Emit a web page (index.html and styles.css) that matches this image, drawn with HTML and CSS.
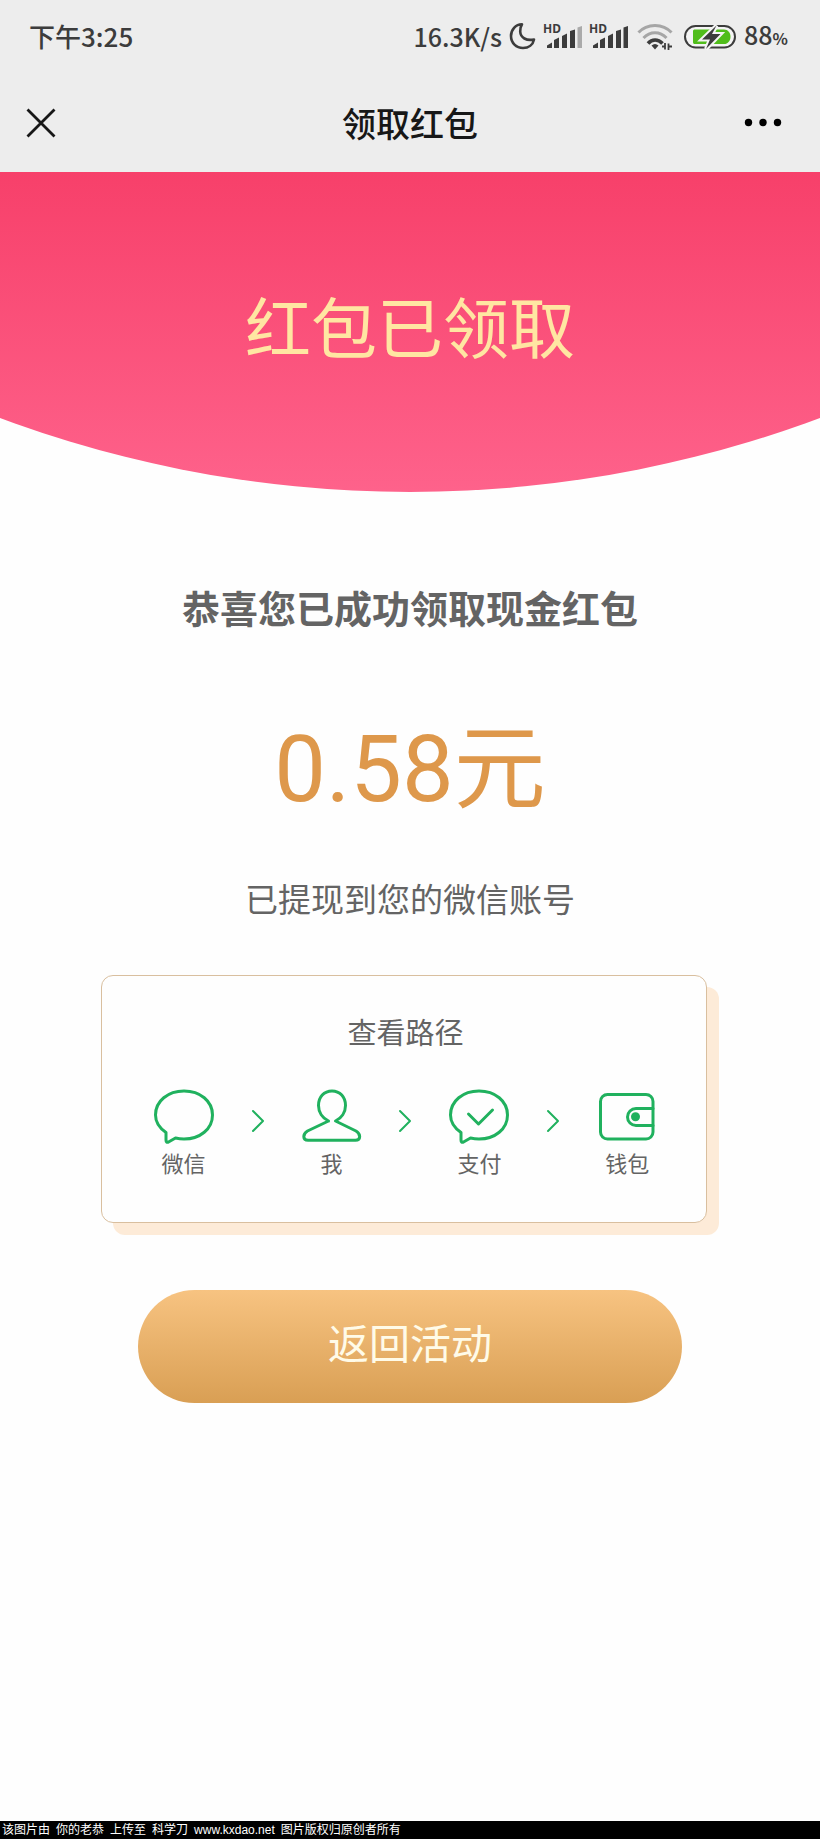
FILE: index.html
```html
<!DOCTYPE html>
<html lang="zh-CN">
<head>
<meta charset="utf-8">
<meta name="viewport" content="width=device-width, initial-scale=1">
<title>领取红包</title>
<link rel="stylesheet" href="styles.css">
</head>
<body>
<header class="top">
  <div class="status">
    <span class="time">下午3:25</span>
    <div class="indicators">
      <span class="speed">16.3K/s</span>
      <svg width="28" height="30" viewBox="0 0 28 30" fill="none" stroke="#3c3c3c" stroke-width="2.6" stroke-linejoin="round"><path d="M14 2.300C7.500 2.300 3 7.700 3 14C3 21 8.300 26 15 26C20.500 26 25 22.800 26 17.500C18.500 19 12.500 16 12.200 9.500C12.100 6.800 12.800 4.200 14 2.300Z"/></svg>
      <svg width="40" height="30" viewBox="0 0 40 30" fill="#3c3c3c"><text class="hd" x="1" y="11">HD</text><path d="M5 26v-2.500l5-3V26zM12 26v-8l5-2.500V26zM20 26V14l5-2.500V26zM28 26V9l5-1.500V26z"/><path fill="#aaa" d="M35.500 26V5.500l4.500-1.500V26z"/></svg>
      <svg width="40" height="30" viewBox="0 0 40 30" fill="#3c3c3c"><text class="hd" x="1" y="11">HD</text><path d="M5 26v-2.500l5-3V26zM12 26v-8l5-2.500V26zM20 26V14l5-2.500V26zM28 26V9l5-1.500V26zM35.500 26V5.500l4.500-1.500V26z"/></svg>
      <svg width="40" height="30" viewBox="0 0 40 30" fill="none"><path stroke="#a6a6a6" stroke-width="3" d="M4.500 10.500C13 1 29 1 37.500 10.500M9.500 16C16 9 26 9 32.500 16"/><path stroke="#3c3c3c" stroke-width="3.600" d="M14 21.500C18 16.800 24 16.800 28.500 21.500"/><path fill="#3c3c3c" d="M17.500 23.500Q21 20.500 24.500 23.500L21 27.500z"/><path stroke="#3c3c3c" stroke-width="1.800" d="M28 24.500h3.200M31 21v6.500M34.500 28v-6.500M34.500 24.500h3.500"/></svg>
      <svg width="58" height="30" viewBox="0 0 58 30"><rect x="5" y="4" width="50" height="21.500" rx="10.700" fill="#f4f4f4" stroke="#3c3c3c" stroke-width="2"/><path fill="#50bd1b" d="M15 7.500h29c4 0 6.500 3.500 6.500 7.200S48 22 44 22H15c-1.500 0-2-.5-2-2V9.500c0-1.500.5-2 2-2z"/><path d="M36.500 3.500L22 17.500h8L26 27 40.500 12h-8.500z" fill="#3c3c3c" stroke="#f4f4f4" stroke-width="4" paint-order="stroke"/></svg>
      <span class="speed">88<small class="percent">%</small></span>
    </div>
  </div>
  <nav class="nav">
    <button class="nav-button" type="button" aria-label="关闭"><svg width="30" height="30" viewBox="0 0 30 30" stroke="#171717" stroke-width="2.800"><path d="M1.500 1.500l27 27M28.500 1.500l-27 27"/></svg></button>
    <h1 class="nav-title">领取红包</h1>
    <button class="nav-button nav-more" type="button" aria-label="更多"><svg width="38" height="30" viewBox="0 0 38 30"><circle cx="4.500" cy="14.500" r="3.700"/><circle cx="19" cy="14.500" r="3.700"/><circle cx="33.500" cy="14.500" r="3.700"/></svg></button>
  </nav>
</header>
<main class="main">
  <section class="hero"><p class="hero-title">红包已领取</p></section>
  <section class="result">
    <h2 class="congrats">恭喜您已成功领取现金红包</h2>
    <p class="amount">0.58元</p>
    <p class="note">已提现到您的微信账号</p>
  </section>
  <section class="card">
    <h3 class="card-title">查看路径</h3>
    <ol class="steps">
      <li class="step"><svg class="icon" width="60" height="56" viewBox="0 0 60 56"><path d="M12 44.500C5.500 40 1.500 34 1.500 27C1.500 13 14 3 30 3S58.500 13 58.500 27S46 51 30 51C27 51 24.500 50.700 21.500 50L14.500 54Q12 55 12 52Z"/></svg>微信</li>
      <li class="arrow"><svg class="icon" width="12" height="22" viewBox="0 0 12 22"><path d="M1 1l10 10L1 21"/></svg></li>
      <li class="step"><svg class="icon" width="60" height="56" viewBox="0 0 60 56"><path d="M26.500 33L5.500 43C.5 46 .5 52.300 6 52.300H53.500C59 52.300 59 46 54 43L33.500 33C39.500 30 43.500 24 43.500 17.500C43.500 9 38 3 30 3S16.500 9 16.500 17.500C16.500 24 20.500 30 26.500 33"/></svg>我</li>
      <li class="arrow"><svg class="icon" width="12" height="22" viewBox="0 0 12 22"><path d="M1 1l10 10L1 21"/></svg></li>
      <li class="step"><svg class="icon" width="60" height="56" viewBox="0 0 60 56"><path d="M12 44.500C5.500 40 1.500 34 1.500 27C1.500 13 14 3 30 3S58.500 13 58.500 27S46 51 30 51C27 51 24.500 50.700 21.500 50L14.500 54Q12 55 12 52Z"/><path d="M19.500 26l10 10 14-14"/></svg>支付</li>
      <li class="arrow"><svg class="icon" width="12" height="22" viewBox="0 0 12 22"><path d="M1 1l10 10L1 21"/></svg></li>
      <li class="step"><svg class="icon" width="60" height="56" viewBox="0 0 60 56"><rect x="3.500" y="6.500" width="52.500" height="44.500" rx="7"/><path d="M56 20.500H39a8.500 8.500 0 0 0 0 17h17"/><circle class="dot" cx="38.500" cy="28.800" r="4.500"/></svg>钱包</li>
    </ol>
  </section>
  <button class="back" type="button">返回活动</button>
</main>
<footer class="credit"><span>该图片由</span><span>你的老恭</span><span>上传至</span><span>科学刀</span><span>www.kxdao.net</span><span>图片版权归原创者所有</span></footer>
</body>
</html>
```
FILE: styles.css
```css
* {
  box-sizing: border-box;
}

body {
  display: flex;
  flex-direction: column;
  min-height: 100vh;
  margin: 0;
  background: #fefefe;
  color: #646464;
  font-family: "Noto Sans CJK SC", sans-serif;
}

h1, h2, h3, p, ol {
  margin: 0;
  padding: 0;
}

svg {
  display: block;
  flex: none;
  overflow: visible;
}

button {
  border: 0;
  padding: 0;
  font-family: inherit;
  cursor: pointer;
}

.top {
  background: #ededed;
}

.status {
  display: flex;
  align-items: center;
  justify-content: space-between;
  height: 72px;
  padding: 0 32px 0 29px;
  color: #3c3c3c;
  font-size: 26px;
  font-weight: 500;
  line-height: 40px;
}

.indicators {
  display: flex;
  align-items: center;
  gap: 6px;
}

.indicators svg {
  margin-top: 2px;
}

.speed {
  font-size: 25px;
}

.hd {
  font-family: "Noto Sans", sans-serif;
  font-size: 12px;
  font-weight: 700;
}

.percent {
  font-size: 16px;
  font-weight: 700;
}

.nav {
  display: grid;
  grid-template-columns: 1fr auto 1fr;
  align-items: center;
  height: 100px;
  padding: 2px 26px 0;
}

.nav-button {
  justify-self: start;
  background: none;
}

.nav-more {
  justify-self: end;
  margin-right: 12px;
}

.nav-title {
  color: #171717;
  font-size: 34px;
  font-weight: 500;
  line-height: 48px;
}

.main {
  display: flex;
  flex: 1;
  flex-direction: column;
  align-items: center;
}

.hero {
  align-self: stretch;
  padding: 112px 0 128px;
  background: linear-gradient(#f7406a, #fe628b);
  clip-path: circle(143vw at 50% calc(100% - 143vw));
  text-align: center;
}

.hero-title {
  color: #ffe6a2;
  font-size: 66px;
  line-height: 80px;
}

.result {
  padding-top: 87px;
  text-align: center;
}

.congrats {
  font-size: 38px;
  font-weight: 700;
  line-height: 56px;
}

.amount {
  margin-top: 79px;
  color: #de984b;
  font-family: Roboto, "Noto Sans CJK SC", sans-serif;
  font-size: 92px;
  line-height: 112px;
}

.note {
  margin-top: 48px;
  font-size: 33px;
  line-height: 48px;
}

.card {
  width: 74%;
  margin: 53px 12px 0 0;
  padding: 35px 49px 46px 52px;
  border: 1px solid #d9bf9f;
  border-radius: 12px;
  background: #fefefe;
  box-shadow: 12px 12px #fdebd8;
}

.card-title {
  font-size: 29px;
  font-weight: 400;
  line-height: 40px;
  text-align: center;
}

.steps {
  display: flex;
  justify-content: space-between;
  margin-top: 37px;
  list-style: none;
}

.step {
  display: flex;
  flex-direction: column;
  align-items: center;
  gap: 4px;
  font-size: 22px;
  line-height: 28px;
}

.arrow {
  padding-top: 22px;
}

.icon {
  fill: none;
  stroke: #20b15e;
  stroke-width: 3;
  stroke-linecap: round;
  stroke-linejoin: round;
}

.arrow .icon {
  stroke-width: 2;
}

.dot {
  fill: #20b15e;
  stroke: none;
}

.back {
  width: 544px;
  max-width: 90%;
  margin: 67px 0 48px;
  padding: 23px 0 34px;
  border-radius: 57px;
  background: linear-gradient(#f7c381, #d99f54);
  color: #fffbe8;
  font-size: 41px;
  line-height: 56px;
}

.credit {
  display: flex;
  gap: 6px;
  padding: 0 2px;
  background: #000;
  color: #fff;
  font-family: "Liberation Sans", "Noto Sans CJK SC", sans-serif;
  font-size: 12px;
  line-height: 18px;
}
```
